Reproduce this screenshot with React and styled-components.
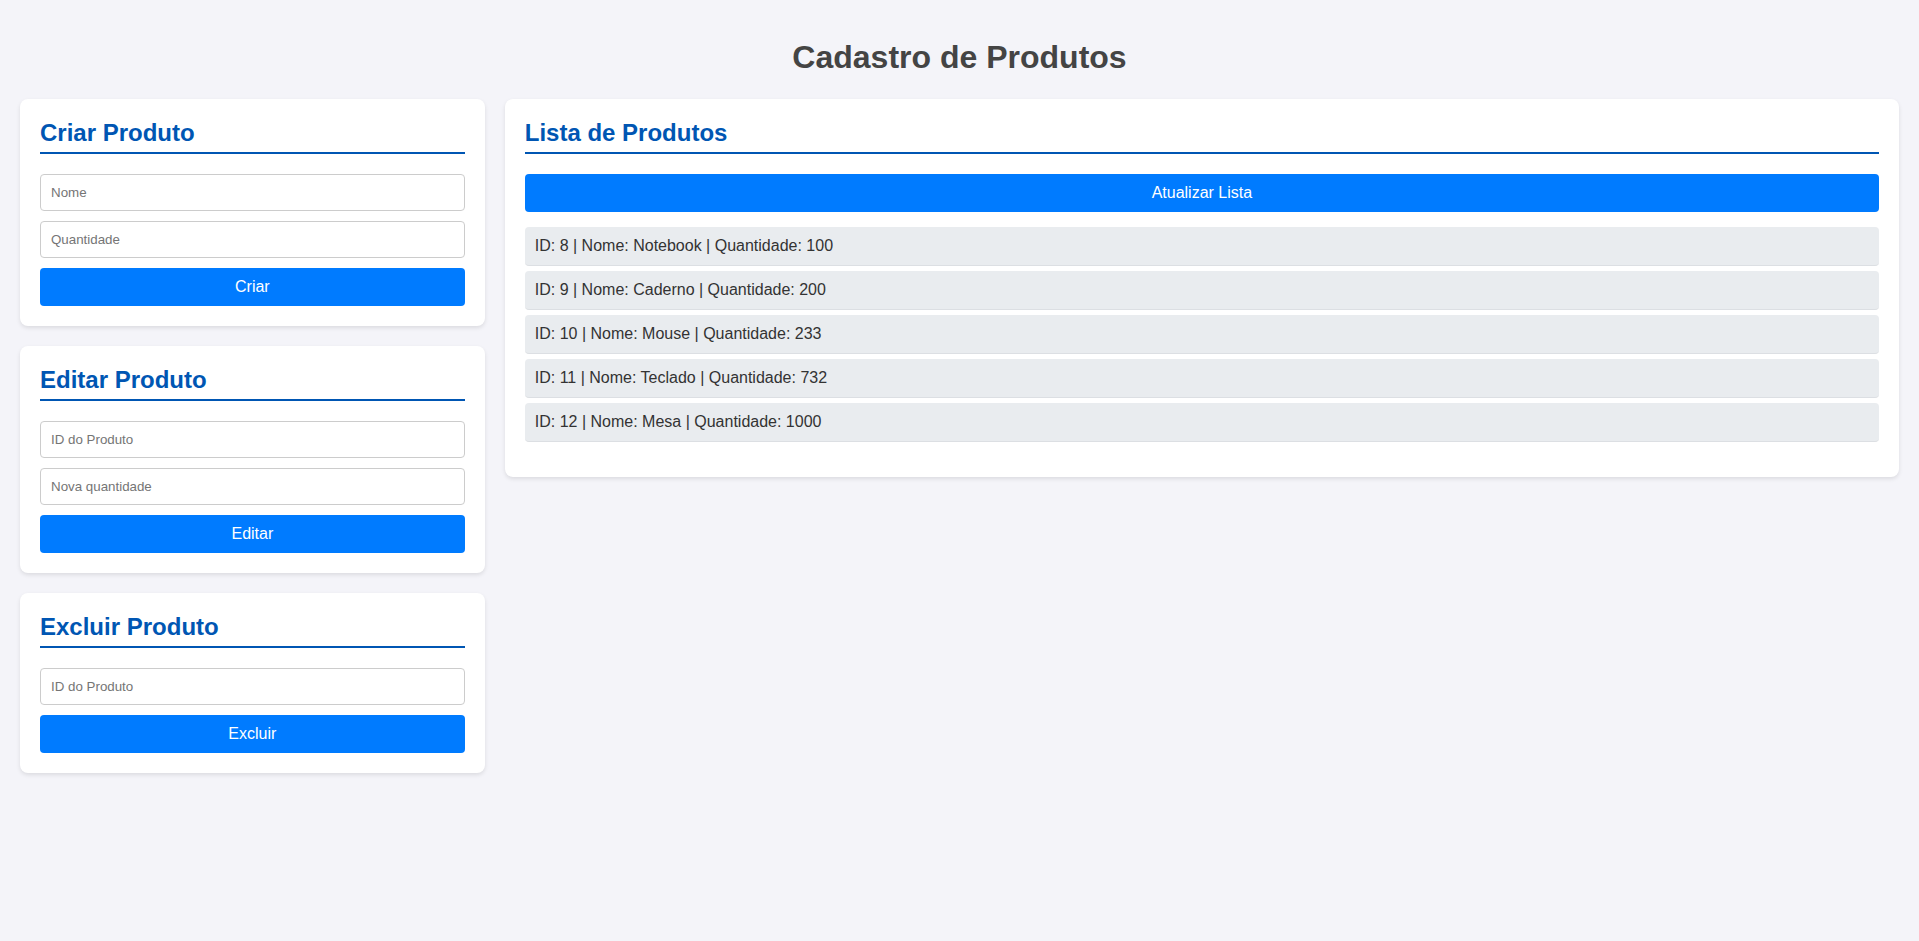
import React from 'react'
import styled, { createGlobalStyle } from 'styled-components'

const produtos = [
    { id: 8, nome: 'Notebook', quantidade: 100 },
    { id: 9, nome: 'Caderno', quantidade: 200 },
    { id: 10, nome: 'Mouse', quantidade: 233 },
    { id: 11, nome: 'Teclado', quantidade: 732 },
    { id: 12, nome: 'Mesa', quantidade: 1000 },
]

const GlobalStyle = createGlobalStyle`
    * {
        box-sizing: border-box;
    }
    html, body {
        margin: 0;
        background-color: #f4f4f9;
        font-family: "Liberation Sans", Arial, sans-serif;
    }
`

const App = () => (
    <>
        <GlobalStyle />
        <Page>
            <Title>Cadastro de Produtos</Title>
            <Layout>
                <Sidebar>
                    <Card>
                        <CardTitle>Criar Produto</CardTitle>
                        <Input placeholder='Nome' />
                        <Input placeholder='Quantidade' />
                        <Button>Criar</Button>
                    </Card>
                    <Card>
                        <CardTitle>Editar Produto</CardTitle>
                        <Input placeholder='ID do Produto' />
                        <Input placeholder='Nova quantidade' />
                        <Button>Editar</Button>
                    </Card>
                    <Card>
                        <CardTitle>Excluir Produto</CardTitle>
                        <Input placeholder='ID do Produto' />
                        <Button>Excluir</Button>
                    </Card>
                </Sidebar>
                <Main>
                    <Card $bottom={35}>
                        <CardTitle>Lista de Produtos</CardTitle>
                        <Button>Atualizar Lista</Button>
                        <List>
                            {produtos.map(p => (
                                <Item key={p.id}>
                                    ID: {p.id} | Nome: {p.nome} | Quantidade: {p.quantidade}
                                </Item>
                            ))}
                        </List>
                    </Card>
                </Main>
            </Layout>
        </Page>
    </>
)

const Page = styled.div`
    padding: 20px;
`

const Title = styled.h1`
    margin: 19px 0 23px;
    text-align: center;
    color: #444;
    font-size: 32px;
    line-height: 37px;
    font-weight: bold;
`

const Layout = styled.div`
    display: flex;
    gap: 20px;
    align-items: flex-start;
`

const Sidebar = styled.div`
    flex: 1;
    display: flex;
    flex-direction: column;
    gap: 20px;
`

const Main = styled.div`
    flex: 3;
`

const Card = styled.section`
    background-color: #fff;
    border-radius: 8px;
    box-shadow: 0 2px 4px rgba(0, 0, 0, 0.1);
    padding: 20px 20px ${p => p.$bottom || 20}px;
    display: flex;
    flex-direction: column;
`

const CardTitle = styled.h2`
    margin: 0 0 20px;
    padding-bottom: 5px;
    border-bottom: 2px solid #0056b3;
    color: #0056b3;
    font-size: 24px;
    line-height: 28px;
    font-weight: bold;
`

const Input = styled.input`
    display: block;
    width: 100%;
    margin: 0 0 10px;
    padding: 10px;
    border: 1px solid #ccc;
    border-radius: 4px;
    font-family: "Liberation Sans", Arial, sans-serif;
    font-size: 13.333px;
    line-height: 15px;
    color: #333;
    outline: none;

    &::placeholder {
        color: #757575;
    }
`

const Button = styled.button`
    display: block;
    width: 100%;
    padding: 10px;
    border: none;
    border-radius: 4px;
    background-color: #007bff;
    color: #fff;
    font-family: "Liberation Sans", Arial, sans-serif;
    font-size: 16px;
    line-height: 18px;
    cursor: pointer;
`

const List = styled.ul`
    list-style: none;
    margin: 15px 0 0;
    padding: 0;
    display: flex;
    flex-direction: column;
    gap: 5px;
`

const Item = styled.li`
    background-color: #e9ecef;
    border-bottom: 1px solid #dcdfe3;
    border-radius: 4px;
    padding: 10px;
    color: #333;
    font-size: 16px;
    line-height: 18px;
`

export default App
